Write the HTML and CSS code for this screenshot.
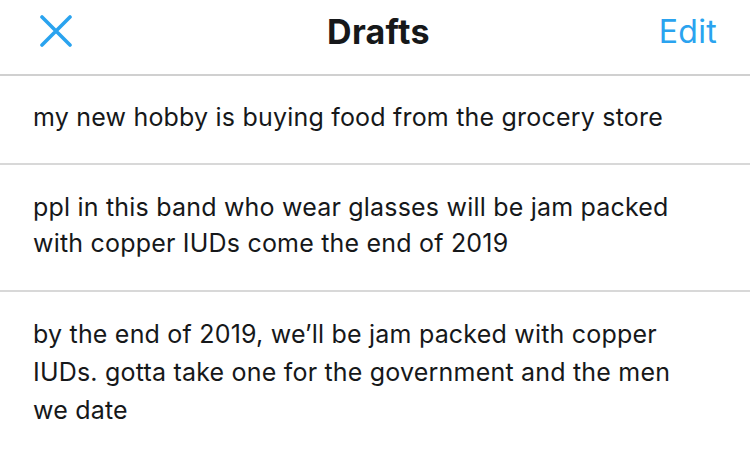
FILE: index.html
```html
<!DOCTYPE html>
<html>
<head>
<meta charset="utf-8">
<link rel="stylesheet" href="styles.css">
</head>
<body>
<div class="app">
  <header class="nav">
    <div class="nav-left">
      <svg class="close" width="32" height="32" viewBox="0 0 32 32">
        <path d="M2 2 L30 30 M30 2 L2 30" stroke="#2aa3ef" stroke-width="3.6" stroke-linecap="round" fill="none"/>
      </svg>
    </div>
    <h1 class="title">Drafts</h1>
    <div class="nav-right"><span class="edit">Edit</span></div>
  </header>
  <ul class="drafts">
    <li class="draft draft-1">my new hobby is buying food from the grocery store</li>
    <li class="draft">ppl in this band who wear glasses will be jam packed with copper IUDs come the end of 2019</li>
    <li class="draft draft-3">by the end of 2019, we’ll be jam packed with copper IUDs. gotta take one for the government and the men we date</li>
  </ul>
</div>
</body>
</html>
```

FILE: styles.css
```css
html, body {
  margin: 0;
  padding: 0;
  background: #ffffff;
}
body {
  font-family: Inter, "Noto Sans", "Liberation Sans", sans-serif;
  color: #16181a;
  width: 750px;
  height: 454px;
  overflow: hidden;
}
.nav {
  height: 76px;
  display: grid;
  grid-template-columns: 1fr auto 1fr;
  align-items: center;
  border-bottom: 2px solid #d0d0d0;
  box-sizing: border-box;
  padding: 0 33px 12px 40px;
}
.nav-left {
  display: flex;
  align-items: center;
}
.close {
  display: block;
}
.title {
  margin: 0;
  font-size: 34px;
  font-weight: 700;
  letter-spacing: 0.3px;
  color: #16181a;
}
.nav-right {
  display: flex;
  justify-content: flex-end;
}
.edit {
  font-size: 32px;
  color: #2aa3ef;
  font-weight: 400;
  letter-spacing: 0.3px;
}
.drafts {
  list-style: none;
  margin: 0;
  padding: 0;
}
.draft {
  font-size: 25px;
  line-height: 36px;
  letter-spacing: 0.2px;
  padding: 24px 50px 29px 33px;
  border-bottom: 2px solid #d8d8d8;
}
.draft-1 {
  padding-top: 23px;
  padding-bottom: 28px;
}
.draft-3 {
  line-height: 38px;
  padding-top: 23px;
  border-bottom: none;
}
```
